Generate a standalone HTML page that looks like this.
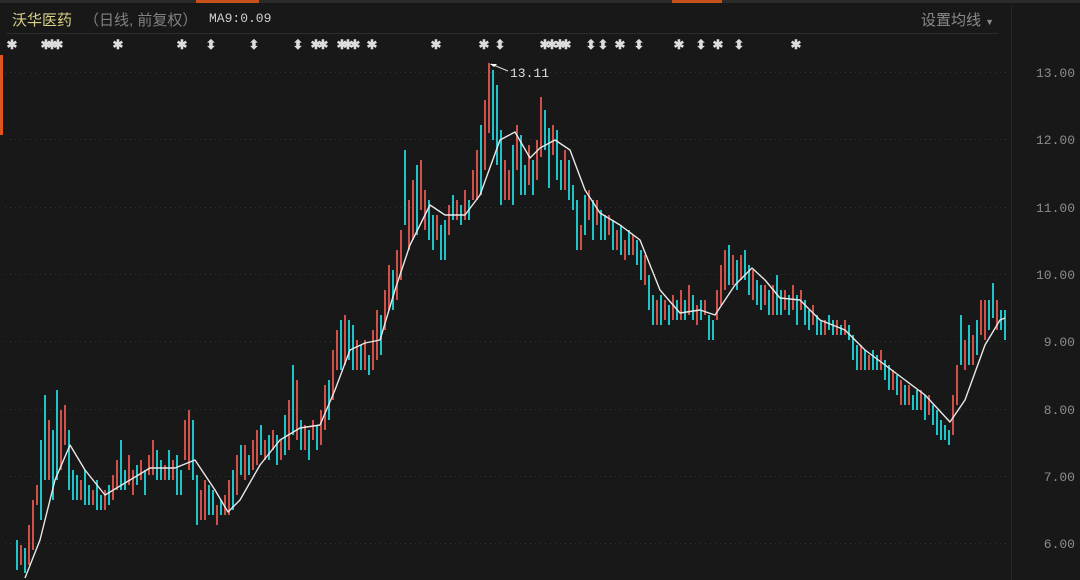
<!DOCTYPE html>
<html><head><meta charset="utf-8"><style>
body{margin:0;width:1080px;height:580px;background:#181818;overflow:hidden;font-family:"Liberation Sans","Noto Sans CJK SC",sans-serif;position:relative}
.t{position:absolute;white-space:nowrap}
</style></head><body>
<div style="position:absolute;left:0;top:0;width:1080px;height:3px;background:#2a2a2a"></div>
<div style="position:absolute;left:196px;top:0;width:63px;height:3px;background:#c8501a"></div>
<div style="position:absolute;left:672px;top:0;width:50px;height:3px;background:#c8501a"></div>
<div style="position:absolute;left:0;top:55px;width:3px;height:80px;background:#e0551c"></div>
<div style="position:absolute;left:1011px;top:5px;width:1px;height:575px;background:#262626"></div>
<div style="position:absolute;left:6px;top:33px;width:992px;height:1px;background:#2c2c2c"></div>
<div class="t" style="left:12px;top:9px;font-size:15px;color:#d8d088">沃华医药</div>
<div class="t" style="left:84px;top:9px;font-size:15px;color:#808080">（日线, 前复权）</div>
<div class="t" style="left:209px;top:11px;font-size:13px;color:#cfcfcf;font-family:'Liberation Mono',monospace">MA9:0.09</div>
<div class="t" style="left:921px;top:9px;font-size:15px;color:#8a8a8a">设置均线 <span style="font-size:9px">▼</span></div>
<svg width="1080" height="580" style="position:absolute;left:0;top:0">
<g stroke="#333" stroke-dasharray="1,4">
<line x1="5" x2="1010" y1="72.5" y2="72.5"/><line x1="5" x2="1010" y1="139.5" y2="139.5"/><line x1="5" x2="1010" y1="207.5" y2="207.5"/><line x1="5" x2="1010" y1="274.5" y2="274.5"/><line x1="5" x2="1010" y1="341.5" y2="341.5"/><line x1="5" x2="1010" y1="409.5" y2="409.5"/><line x1="5" x2="1010" y1="476.5" y2="476.5"/><line x1="5" x2="1010" y1="543.5" y2="543.5"/>
</g>
<g fill="#8c8c8c" font-size="13" text-anchor="end" font-family="Liberation Mono,monospace">
<text x="1075" y="77">13.00</text><text x="1075" y="144">12.00</text><text x="1075" y="212">11.00</text><text x="1075" y="279">10.00</text><text x="1075" y="346">9.00</text><text x="1075" y="414">8.00</text><text x="1075" y="481">7.00</text><text x="1075" y="548">6.00</text>
</g>
<g fill="#ddd" font-size="13" font-weight="bold" text-anchor="middle">
<text x="12" y="49">✱</text><text x="46" y="49">✱</text><text x="52" y="49">✱</text><text x="58" y="49">✱</text><text x="118" y="49">✱</text><text x="182" y="49">✱</text><text x="211" y="49">⬍</text><text x="254" y="49">⬍</text><text x="298" y="49">⬍</text><text x="316" y="49">✱</text><text x="323" y="49">✱</text><text x="342" y="49">✱</text><text x="348" y="49">✱</text><text x="355" y="49">✱</text><text x="372" y="49">✱</text><text x="436" y="49">✱</text><text x="484" y="49">✱</text><text x="500" y="49">⬍</text><text x="545" y="49">✱</text><text x="552" y="49">✱</text><text x="560" y="49">✱</text><text x="566" y="49">✱</text><text x="591" y="49">⬍</text><text x="603" y="49">⬍</text><text x="620" y="49">✱</text><text x="639" y="49">⬍</text><text x="679" y="49">✱</text><text x="701" y="49">⬍</text><text x="718" y="49">✱</text><text x="739" y="49">⬍</text><text x="796" y="49">✱</text>
</g>
<path stroke="#d0504a" stroke-width="2" fill="none" d="M21,545v20M29,525v40M33,500v50M37,485v20M49,420v60M61,410v60M65,405v40M81,480v20M93,490v15M105,490v20M113,475v25M117,460v30M129,455v30M133,470v25M141,460v20M149,455v20M153,440v35M165,465v15M173,460v20M185,420v40M189,410v60M201,490v30M205,480v40M217,505v20M225,495v20M229,480v35M237,455v40M245,445v35M253,440v30M257,430v35M265,440v20M273,430v20M281,440v20M289,400v50M297,380v60M305,425v25M313,420v20M321,410v35M325,385v45M333,350v50M337,330v40M345,315v50M357,340v30M365,340v30M373,330v40M377,310v50M385,290v40M389,265v45M397,250v50M401,230v50M409,200v50M413,180v60M421,160v50M425,190v40M437,215v25M449,205v30M457,200v20M465,190v30M473,170v30M477,150v50M485,100v70M489,63v70M505,160v40M509,170v30M517,125v45M529,145v40M537,140v40M541,97v60M553,125v30M565,150v40M581,225v25M589,190v30M597,200v25M609,215v20M617,230v20M625,240v20M633,235v20M645,255v30M657,300v25M665,300v20M673,295v25M681,290v30M689,285v30M697,305v20M705,300v15M717,290v30M721,265v40M725,250v40M733,255v30M741,255v25M753,270v30M765,285v20M773,285v30M785,290v20M793,285v25M801,290v20M813,305v20M825,320v15M837,320v15M845,320v15M861,345v25M869,355v15M881,350v20M893,370v20M901,380v25M909,385v20M921,390v20M929,395v20M953,395v40M957,365v40M965,340v30M973,335v30M981,300v35M985,300v40M997,300v30"/>
<path stroke="#20c4c8" stroke-width="2" fill="none" d="M17,540v30M25,548v25M41,440v80M45,395v85M53,430v70M57,390v90M69,430v60M73,470v30M77,475v25M85,470v35M89,485v20M97,480v30M101,495v15M109,485v20M121,440v50M125,470v20M137,465v20M145,470v25M157,450v30M161,460v20M169,450v30M177,455v40M181,470v25M193,420v60M197,475v50M209,485v30M213,490v25M221,500v15M233,470v40M241,445v30M249,455v20M261,425v30M269,435v25M277,435v30M285,415v40M293,365v70M301,420v30M309,430v30M317,425v25M329,380v40M341,320v50M349,320v40M353,325v45M361,345v25M369,355v20M381,315v40M393,270v40M405,150v75M417,165v70M429,200v40M433,215v35M441,225v35M445,220v40M453,195v25M461,205v20M469,200v20M481,125v70M493,70v70M497,85v80M501,130v75M513,145v60M521,135v60M525,165v30M533,160v35M545,110v40M549,128v60M557,130v50M561,160v30M569,160v40M573,185v25M577,200v50M585,195v40M593,200v40M601,210v30M605,215v25M613,220v30M621,225v30M629,230v25M637,240v25M641,250v30M649,275v35M653,295v30M661,295v30M669,305v20M677,300v20M685,300v20M693,295v25M701,300v20M709,315v25M713,320v20M729,245v40M737,260v30M745,250v30M749,265v30M757,280v25M761,285v25M769,290v25M777,275v40M781,290v25M789,295v20M797,295v30M805,300v25M809,310v20M817,315v20M821,320v15M829,315v15M833,320v15M841,325v10M849,325v15M853,335v25M857,345v25M865,350v20M873,350v20M877,355v15M885,360v20M889,365v25M897,375v20M905,385v20M913,395v15M917,390v20M925,395v25M933,405v20M937,410v25M941,420v20M945,425v15M949,430v15M961,315v50M969,325v40M977,320v35M989,300v30M993,283v35M1001,310v20M1005,310v30"/>
<path d="M25,578 L40,540 L55,480 L70,445 L85,470 L105,495 L130,480 L150,468 L175,468 L195,460 L215,490 L228,512 L240,500 L260,465 L280,440 L300,428 L320,425 L335,390 L350,350 L365,343 L380,340 L395,290 L410,245 L430,205 L445,215 L465,215 L480,195 L500,140 L515,132 L530,158 L540,148 L555,140 L570,150 L585,190 L600,213 L620,225 L640,240 L660,290 L680,313 L700,310 L715,315 L735,285 L752,268 L765,280 L780,298 L800,300 L820,320 L845,330 L865,350 L885,365 L905,380 L925,395 L950,422 L965,400 L985,345 L1000,320 L1005,318" fill="none" stroke="#e8e8e8" stroke-width="1.4" stroke-linejoin="round"/>
<path d="M491,64 L508,71" stroke="#ddd"/><path d="M490,64 l7,0 l-3,3z" fill="#fff"/>
<text x="510" y="77" fill="#ddd" font-size="13" font-family="Liberation Mono,monospace">13.11</text>
</svg>
</body></html>
